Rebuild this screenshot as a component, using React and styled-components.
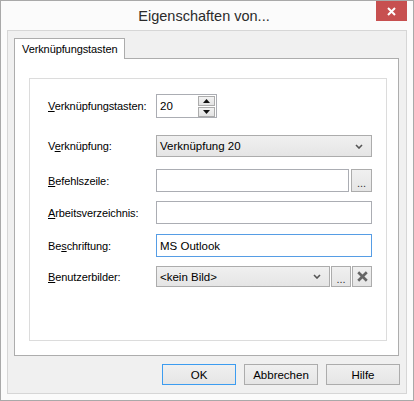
import React from 'react';
import styled, { createGlobalStyle } from 'styled-components';

const GlobalStyle = createGlobalStyle`
    html, body {
        margin: 0;
        padding: 0;
        background: #ffffff;
    }
    * {
        box-sizing: border-box;
    }
`;

const Window = styled.div`
    width: 414px;
    height: 401px;
    border: 1px solid #a9a9a9;
    background: #fbfbfb;
    display: flex;
    flex-direction: column;
    font-family: "Liberation Sans", Arial, sans-serif;
    font-size: 11px;
    color: #000;
`;

const TitleBar = styled.div`
    height: 29px;
    display: grid;
    grid-template-columns: 1fr auto 1fr;
    align-items: center;
    padding-right: 6px;
`;

const Title = styled.div`
    grid-column: 2;
    font-size: 14.5px;
    color: #2b2b2b;
    padding-top: 1px;
`;

const CloseButton = styled.div`
    grid-column: 3;
    justify-self: end;
    align-self: start;
    width: 31px;
    height: 20px;
    background: #c75050;
    display: flex;
    align-items: center;
    justify-content: center;
`;

const Client = styled.div`
    flex: 1;
    margin: 0 6px 6px 6px;
    border: 1px solid #d6d6d6;
    background: #f0f0f0;
    padding: 7px 7px 8px 6px;
    display: flex;
    flex-direction: column;
`;

const TabStrip = styled.div`
    display: flex;
    position: relative;
    z-index: 1;
    margin-bottom: -1px;
`;

const Tab = styled.div`
    width: 111px;
    height: 21px;
    border: 1px solid #acacac;
    border-bottom: none;
    background: #fff;
    padding: 0 0 0 7px;
    display: flex;
    align-items: center;
    font-size: 11px;
    letter-spacing: -0.1px;
`;

const Panel = styled.div`
    flex: 1;
    border: 1px solid #adadad;
    background: #fff;
    padding: 19px 11px 14px 14px;
    display: flex;
`;

const Group = styled.div`
    flex: 1;
    border: 1px solid #dcdcdc;
    padding: 15px 14px 0 18px;
    display: flex;
    flex-direction: column;
`;

const Row = styled.div`
    display: flex;
    align-items: center;
    margin-top: ${props => props.$top || 0}px;
`;

const Label = styled.div`
    width: 108px;
    flex-shrink: 0;
    font-size: 11px;
    letter-spacing: -0.1px;
    white-space: nowrap;
`;

const Key = styled.span`
    text-decoration: underline;
    text-underline-offset: 1px;
`;

const Field = styled.div`
    flex: 1;
    display: flex;
    gap: ${props => props.$gap || 0}px;
`;

const TextBox = styled.div`
    flex: ${props => (props.$width ? 'none' : 1)};
    width: ${props => (props.$width ? `${props.$width}px` : 'auto')};
    height: ${props => props.$height || 23}px;
    border: 1px solid ${props => (props.$focused ? '#569de5' : '#abadb3')};
    background: #fff;
    display: flex;
    align-items: center;
    padding-left: 3px;
    font-size: 11.5px;
`;

const SpinBox = styled(TextBox)`
    padding-right: 1px;
    justify-content: space-between;
`;

const SpinButtons = styled.div`
    display: flex;
    flex-direction: column;
    gap: 1px;
`;

const SpinButton = styled.div`
    width: 17px;
    height: 10px;
    border: 1px solid #acacac;
    background: linear-gradient(#f2f2f2, #e3e3e3);
    display: flex;
    align-items: center;
    justify-content: center;
`;

const Combo = styled.div`
    flex: ${props => (props.$width ? 'none' : 1)};
    width: ${props => (props.$width ? `${props.$width}px` : 'auto')};
    height: ${props => props.$height || 22}px;
    border: 1px solid #acacac;
    background: linear-gradient(#f0f0f0, #e5e5e5);
    display: flex;
    align-items: center;
    justify-content: space-between;
    padding: 0 8px 0 3px;
    font-size: 11.5px;
`;

const SmallButton = styled.div`
    width: ${props => props.$width || 20}px;
    height: ${props => props.$height || 23}px;
    border: 1px solid #acacac;
    background: linear-gradient(#f0f0f0, #e5e5e5);
    display: flex;
    align-items: center;
    justify-content: center;
    font-size: 11px;
    color: #333;
    padding-top: 4px;
`;

const ClearButton = styled(SmallButton)`
    padding-top: 0;
`;

const ButtonRow = styled.div`
    margin-top: 8px;
    display: flex;
    justify-content: flex-end;
    gap: 8px;
    margin-right: -1px;
`;

const Button = styled.div`
    width: 74px;
    height: 21px;
    border: 1px solid ${props => (props.$default ? '#3c9cf0' : '#acacac')};
    background: linear-gradient(#f0f0f0, #e5e5e5);
    display: flex;
    align-items: center;
    justify-content: center;
    font-size: 11.5px;
`;

const Chevron = () => (
    <svg width="8" height="5" viewBox="0 0 8 5">
        <path d="M1 1 L4 4 L7 1" fill="none" stroke="#555" strokeWidth="1.6" />
    </svg>
);

const Arrow = ({ up }) => (
    <svg width="7" height="4" viewBox="0 0 7 4">
        <path d={up ? 'M0 4 L3.5 0 L7 4 Z' : 'M0 0 L3.5 4 L7 0 Z'} fill="#111" />
    </svg>
);

const CloseGlyph = ({ color = '#fff', size = 9, weight = 2 }) => (
    <svg width={size} height={size} viewBox="0 0 9 9">
        <path d="M1 1 L8 8 M8 1 L1 8" stroke={color} strokeWidth={weight} />
    </svg>
);

export default function App() {
    return (
        <Window>
            <GlobalStyle />
            <TitleBar>
                <Title>Eigenschaften von...</Title>
                <CloseButton>
                    <CloseGlyph />
                </CloseButton>
            </TitleBar>
            <Client>
                <TabStrip>
                    <Tab>Verknüpfungstasten</Tab>
                </TabStrip>
                <Panel>
                    <Group>
                        <Row>
                            <Label><Key>V</Key>erknüpfungstasten:</Label>
                            <Field>
                                <SpinBox $width={61} $height={24}>
                                    20
                                    <SpinButtons>
                                        <SpinButton><Arrow up /></SpinButton>
                                        <SpinButton><Arrow /></SpinButton>
                                    </SpinButtons>
                                </SpinBox>
                            </Field>
                        </Row>
                        <Row $top={17}>
                            <Label>V<Key>e</Key>rknüpfung:</Label>
                            <Field>
                                <Combo>
                                    Verknüpfung 20
                                    <Chevron />
                                </Combo>
                            </Field>
                        </Row>
                        <Row $top={12}>
                            <Label><Key>B</Key>efehlszeile:</Label>
                            <Field $gap={2}>
                                <TextBox />
                                <SmallButton $width={21}>...</SmallButton>
                            </Field>
                        </Row>
                        <Row $top={9}>
                            <Label><Key>A</Key>rbeitsverzeichnis:</Label>
                            <Field>
                                <TextBox />
                            </Field>
                        </Row>
                        <Row $top={10}>
                            <Label>Be<Key>s</Key>chriftung:</Label>
                            <Field>
                                <TextBox $focused>MS Outlook</TextBox>
                            </Field>
                        </Row>
                        <Row $top={9}>
                            <Label><Key>B</Key>enutzerbilder:</Label>
                            <Field $gap={1}>
                                <Combo $height={21} $width={174}>
                                    &lt;kein Bild&gt;
                                    <Chevron />
                                </Combo>
                                <SmallButton $height={21}>...</SmallButton>
                                <ClearButton $height={21}>
                                    <CloseGlyph color="#666" size={11} weight={2.2} />
                                </ClearButton>
                            </Field>
                        </Row>
                    </Group>
                </Panel>
                <ButtonRow>
                    <Button $default>OK</Button>
                    <Button>Abbrechen</Button>
                    <Button>Hilfe</Button>
                </ButtonRow>
            </Client>
        </Window>
    );
}
